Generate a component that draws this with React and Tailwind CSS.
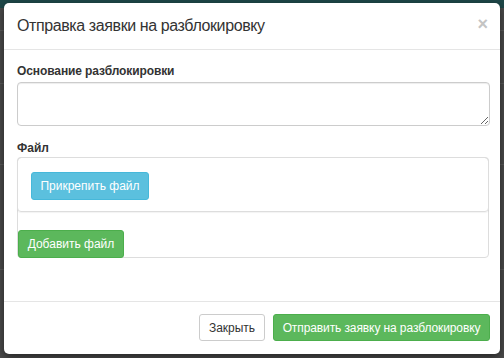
import React from "react";

export default function App() {
  return (
    <div
      className="relative w-[504px] h-[358px] overflow-hidden bg-[#4a4a4a]"
      style={{ fontFamily: '"Liberation Sans", Arial, sans-serif' }}
    >
      {/* dimmed page behind the modal */}
      <div className="h-[8px] bg-[#1e4748]" />
      <div className="mt-[22px] border-t border-[#5a5a5a]" />
      <div className="mt-[52px] border-t border-[#5a5a5a]" />
      <div className="mt-[80px] border-t border-[#5a5a5a]" />
      <div className="mt-[104px] border-t border-[#5a5a5a]" />

      <div className="absolute left-[4px] top-[3px] w-[496px] h-[351px] flex flex-col rounded-[5px] bg-white shadow-[0_3px_9px_rgba(0,0,0,0.5)]">
        <div className="h-[47px] flex items-center justify-between pl-[13px] pr-[12px] border-b border-[#e5e5e5]">
          <h4 className="text-[16px] tracking-[-0.4px] text-[#333] font-normal">Отправка заявки на разблокировку</h4>
          <button className="text-[18px] leading-none font-bold text-[#c4c4c4] -mt-[4px]">×</button>
        </div>

        <div className="flex-1 px-[13px] pt-[13px]">
          <label className="block h-[17px] text-[12px] font-bold text-[#333] leading-[17px] tracking-[-0.1px]">
            Основание разблокировки
          </label>
          <textarea className="mt-[2px] block w-[473px] h-[44px] rounded-[4px] border border-[#ccc] shadow-[inset_0_1px_1px_rgba(0,0,0,0.075)] outline-none" />

          <label className="mt-[14px] block h-[17px] text-[12px] font-bold text-[#333] leading-[17px]">Файл</label>
          <div className="w-[472px] h-[101px] rounded-[4px] border border-[#ddd] flex flex-col justify-between">
            <div className="h-[55px] -mt-px -mx-px rounded-[4px] border border-[#ddd] pl-[13px] pt-[14px] shadow-[0_1px_1px_rgba(0,0,0,0.05)]">
              <button className="w-[118px] h-[28px] rounded-[3px] border border-[#46b8da] bg-[#5bc0de] text-[12px] text-white">
                Прикрепить файл
              </button>
            </div>
            <button className="-mb-px w-[106px] h-[28px] rounded-[3px] border border-[#4cae4c] bg-[#5cb85c] text-[12px] text-white">
              Добавить файл
            </button>
          </div>
        </div>

        <div className="h-[53px] border-t border-[#e5e5e5] flex items-start justify-end gap-[8px] pt-[12px] pr-[10px]">
          <button className="w-[66px] h-[27px] rounded-[3px] border border-[#ccc] bg-white text-[12px] text-[#333]">
            Закрыть
          </button>
          <button className="w-[217px] h-[27px] rounded-[3px] border border-[#4cae4c] bg-[#5cb85c] text-[12px] text-white tracking-[-0.1px]">
            Отправить заявку на разблокировку
          </button>
        </div>
      </div>
    </div>
  );
}
